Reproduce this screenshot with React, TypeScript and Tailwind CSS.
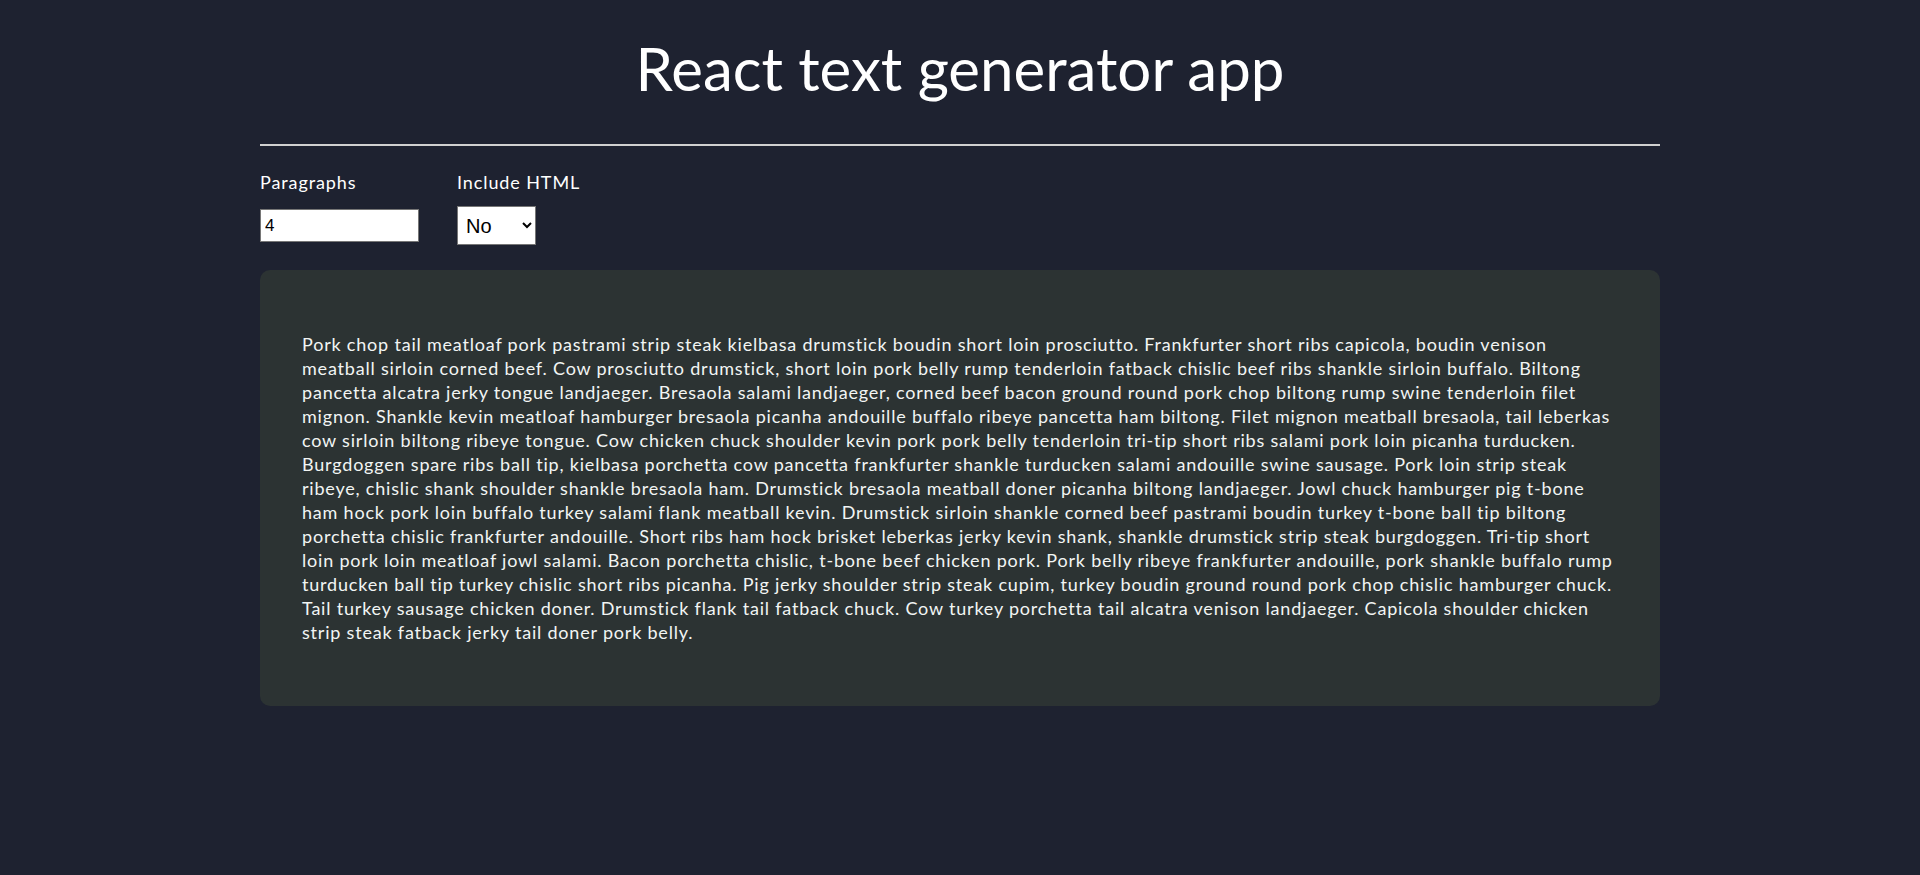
import * as React from "react";

const text =
  "Pork chop tail meatloaf pork pastrami strip steak kielbasa drumstick boudin short loin prosciutto. Frankfurter short ribs capicola, boudin venison meatball sirloin corned beef. Cow prosciutto drumstick, short loin pork belly rump tenderloin fatback chislic beef ribs shankle sirloin buffalo. Biltong pancetta alcatra jerky tongue landjaeger. Bresaola salami landjaeger, corned beef bacon ground round pork chop biltong rump swine tenderloin filet mignon. Shankle kevin meatloaf hamburger bresaola picanha andouille buffalo ribeye pancetta ham biltong. Filet mignon meatball bresaola, tail leberkas cow sirloin biltong ribeye tongue. Cow chicken chuck shoulder kevin pork pork belly tenderloin tri-tip short ribs salami pork loin picanha turducken. Burgdoggen spare ribs ball tip, kielbasa porchetta cow pancetta frankfurter shankle turducken salami andouille swine sausage. Pork loin strip steak ribeye, chislic shank shoulder shankle bresaola ham. Drumstick bresaola meatball doner picanha biltong landjaeger. Jowl chuck hamburger pig t-bone ham hock pork loin buffalo turkey salami flank meatball kevin. Drumstick sirloin shankle corned beef pastrami boudin turkey t-bone ball tip biltong porchetta chislic frankfurter andouille. Short ribs ham hock brisket leberkas jerky kevin shank, shankle drumstick strip steak burgdoggen. Tri-tip short loin pork loin meatloaf jowl salami. Bacon porchetta chislic, t-bone beef chicken pork. Pork belly ribeye frankfurter andouille, pork shankle buffalo rump turducken ball tip turkey chislic short ribs picanha. Pig jerky shoulder strip steak cupim, turkey boudin ground round pork chop chislic hamburger chuck. Tail turkey sausage chicken doner. Drumstick flank tail fatback chuck. Cow turkey porchetta tail alcatra venison landjaeger. Capicola shoulder chicken strip steak fatback jerky tail doner pork belly.";

const App: React.FC = () => {
  const [count, setCount] = React.useState("4");
  const [html, setHtml] = React.useState("no");

  return (
    <div className="min-h-[875px] bg-[#1e2230] font-['Lato','Noto_Sans',sans-serif] text-white">
      <div className="mx-auto w-[1400px] pt-8">
        <h1 className="text-center text-[60px] leading-[72px] font-normal">React text generator app</h1>
        <hr className="mt-10 border-0 border-t-2 border-[#d0d0d0]" />

        <form className="mt-6 flex gap-[38px]">
          <div className="flex flex-col">
            <label htmlFor="amount" className="text-[18px] leading-6 tracking-[0.9px]">Paragraphs</label>
            <div className="mt-3 flex h-[39px] items-center">
              <input
                id="amount"
                type="number"
                value={count}
                onChange={(e) => setCount(e.target.value)}
                className="h-[33px] w-[159px] border border-[#767676] bg-white px-[4px] font-['Liberation_Sans',Arial,sans-serif] text-[17px] text-black [appearance:textfield] [&::-webkit-inner-spin-button]:appearance-none"
              />
            </div>
          </div>
          <div className="flex flex-col">
            <label htmlFor="html" className="text-[18px] leading-6 tracking-[0.9px]">Include HTML</label>
            <div className="mt-3 flex h-[39px] items-center">
              <select
                id="html"
                value={html}
                onChange={(e) => setHtml(e.target.value)}
                className="h-[39px] w-[79px] border border-[#767676] bg-white pl-[4px] font-['Liberation_Sans',Arial,sans-serif] text-[20px] text-black"
              >
                <option value="no">No</option>
                <option value="yes">Yes</option>
              </select>
            </div>
          </div>
        </form>

        <article className="mt-[25px] rounded-[10px] bg-[#2c3333] px-[42px] py-[62px]">
          <p className="text-[18px] leading-6 tracking-[0.8px] text-[#f2f5f4]">{text}</p>
        </article>
      </div>
    </div>
  );
};

export default App;
